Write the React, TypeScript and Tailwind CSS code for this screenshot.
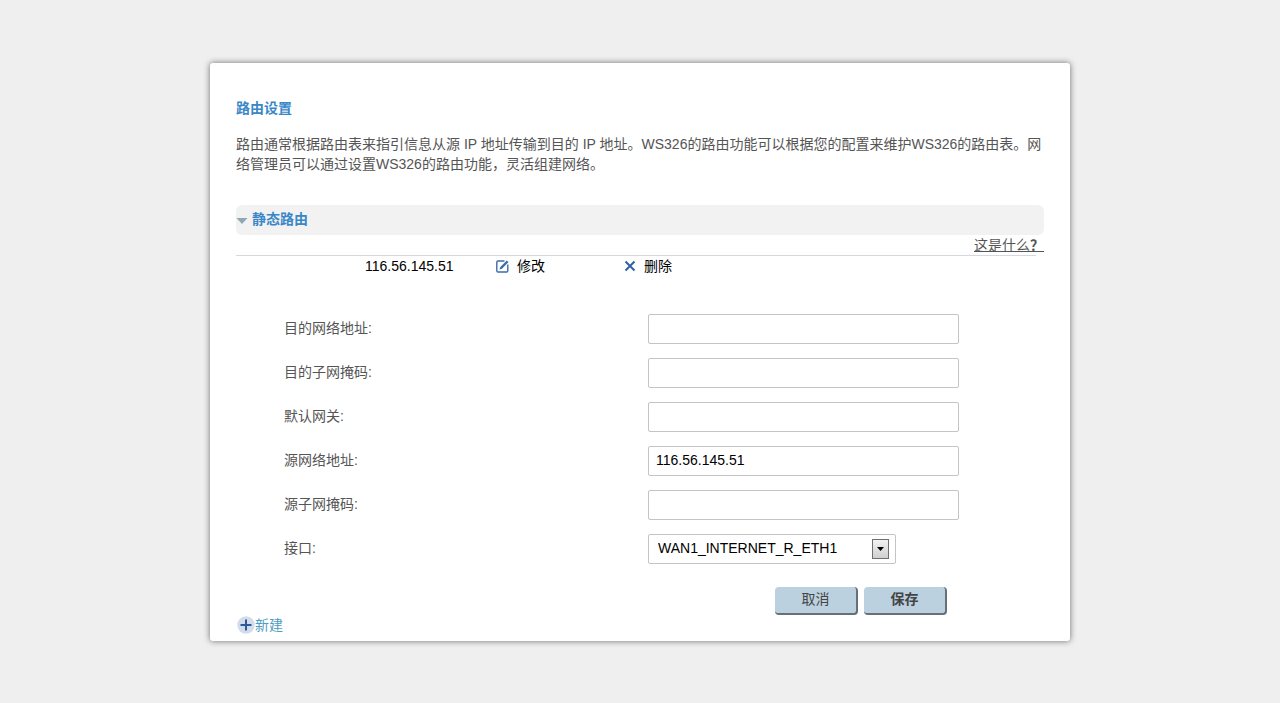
import { useState } from "react";

const fields = [
  { name: "destAddress", label: "目的网络地址:" },
  { name: "destMask", label: "目的子网掩码:" },
  { name: "gateway", label: "默认网关:" },
  { name: "sourceAddress", label: "源网络地址:" },
  { name: "sourceMask", label: "源子网掩码:" },
];

function EditIcon() {
  return (
    <svg width="13" height="14" viewBox="0 0 13 14" fill="none" aria-hidden="true">
      <path d="M8.5 2H2A1.2 1.2 0 0 0 .8 3.2v8.6A1.2 1.2 0 0 0 2 13h8.6a1.2 1.2 0 0 0 1.2-1.2V5.5" stroke="#3d6ca8" strokeWidth="1.4" />
      <path d="M3.4 10.6l.9-2.6L10.8 1.4l1.7 1.7L6 9.7z" fill="#3d6ca8" />
    </svg>
  );
}

function DeleteIcon() {
  return (
    <svg width="12" height="12" viewBox="0 0 12 12" fill="none" stroke="#2f62a3" strokeWidth="2" aria-hidden="true">
      <path d="M1.5 1.5l9 9M10.5 1.5l-9 9" />
    </svg>
  );
}

function AddIcon() {
  return (
    <svg width="18" height="18" viewBox="0 0 18 18" aria-hidden="true">
      <circle cx="9" cy="9" r="8.7" fill="#d3dcea" />
      <path d="M9 3.5v11M3.5 9h11" stroke="#2b5a9c" strokeWidth="2" />
    </svg>
  );
}

export default function App() {
  const [formData, setFormData] = useState<Record<string, string>>({
    destAddress: "",
    destMask: "",
    gateway: "",
    sourceAddress: "116.56.145.51",
    sourceMask: "",
    port: "WAN1_INTERNET_R_ETH1",
  });

  const handleChange = (e: React.ChangeEvent<HTMLInputElement | HTMLSelectElement>) => {
    setFormData({ ...formData, [e.target.name]: e.target.value });
  };

  return (
    <div
      lang="zh-CN"
      className="min-h-screen bg-[#efefef] px-4 py-[63px] text-sm leading-5 text-[#555] font-['Liberation_Sans','Noto_Sans_CJK_SC',sans-serif]"
    >
      <main className="mx-auto max-w-[860px] rounded-[3px] bg-white px-[26px] pt-[35px] pb-[6px] shadow-[0_0_6px_rgba(0,0,0,0.55)]">
        <h1 className="font-bold text-[#3a87c8]">路由设置</h1>
        <p className="mt-4">
          路由通常根据路由表来指引信息从源 IP 地址传输到目的 IP 地址。WS326的路由功能可以根据您的配置来维护WS326的路由表。网络管理员可以通过设置WS326的路由功能，灵活组建网络。
        </p>

        <section className="mt-[31px]">
          <h2 className="rounded-md bg-[#f2f2f2]">
            <button type="button" className="flex h-[30px] w-full items-center gap-1 pb-0.5 font-bold text-[#3a87c8]">
              <svg width="12" height="6" viewBox="0 0 12 6" className="mt-1" aria-hidden="true">
                <path d="M0.5 0h11L6 6z" fill="#8fa9b4" />
              </svg>
              静态路由
            </button>
          </h2>
          <div className="text-right">
            <a href="#help" className="underline">
              这是什么<span className="font-bold">？</span>
            </a>
          </div>

          <div className="mr-2 border-t border-[#d3d9de]">
            <table className="w-full table-fixed text-black">
              <tbody>
                <tr>
                  <td className="w-[16%]"></td>
                  <td className="w-[16%] p-0 pl-px">116.56.145.51</td>
                  <td className="w-[16%] p-0 pl-1">
                    <a href="#edit" className="flex items-center gap-2">
                      <EditIcon />
                      修改
                    </a>
                  </td>
                  <td className="p-0 pl-1">
                    <a href="#delete" className="flex items-center gap-2">
                      <DeleteIcon />
                      删除
                    </a>
                  </td>
                </tr>
              </tbody>
            </table>
          </div>

          <form onSubmit={(e) => e.preventDefault()} className="mt-[38px] pl-12">
            <div className="space-y-[14px]">
              {fields.map((field) => (
                <div key={field.name} className="flex items-center">
                  <label htmlFor={field.name} className="w-[364px] pb-0.5">{field.label}</label>
                  <input
                    id={field.name}
                    name={field.name}
                    type="text"
                    value={formData[field.name]}
                    onChange={handleChange}
                    className="h-[30px] w-[311px] rounded-xs border border-[#c4c4c4] bg-white px-[7px] pb-0.5 text-black outline-none"
                  />
                </div>
              ))}
              <div className="flex items-center">
                <label htmlFor="port" className="w-[364px] pb-0.5">接口:</label>
                <div className="relative">
                  <select
                    id="port"
                    name="port"
                    value={formData.port}
                    onChange={handleChange}
                    className="block h-[30px] w-[248px] appearance-none rounded-xs border border-[#c4c4c4] bg-white pr-8 pb-0.5 pl-[9px] text-black outline-none"
                  >
                    <option>WAN1_INTERNET_R_ETH1</option>
                  </select>
                  <span className="pointer-events-none absolute top-[5px] right-[7px] flex h-5 w-[17px] items-center justify-center border border-[#707070] bg-linear-to-b from-[#f2f2f2] to-[#d0d0d0]">
                    <svg width="7" height="4" viewBox="0 0 7 4" aria-hidden="true">
                      <path d="M0 0h7L3.5 4z" fill="#000" />
                    </svg>
                  </span>
                </div>
              </div>
            </div>

            <div className="mt-[23px] mr-[97px] flex justify-end gap-1.5">
              <button
                type="button"
                className="h-7 w-[83px] rounded-[4px] border-r-2 border-b-2 border-[#667078] bg-[#bbd1df] pb-0.5 text-[#444]"
              >
                取消
              </button>
              <button
                type="submit"
                className="h-7 w-[83px] rounded-[4px] border-r-2 border-b-2 border-[#667078] bg-[#bbd1df] pb-0.5 font-bold text-[#444]"
              >
                保存
              </button>
            </div>
          </form>

          <a href="#new" className="flex w-fit items-center pl-px text-[#4f9dc0]">
            <AddIcon />
            新建
          </a>
        </section>
      </main>
    </div>
  );
}
